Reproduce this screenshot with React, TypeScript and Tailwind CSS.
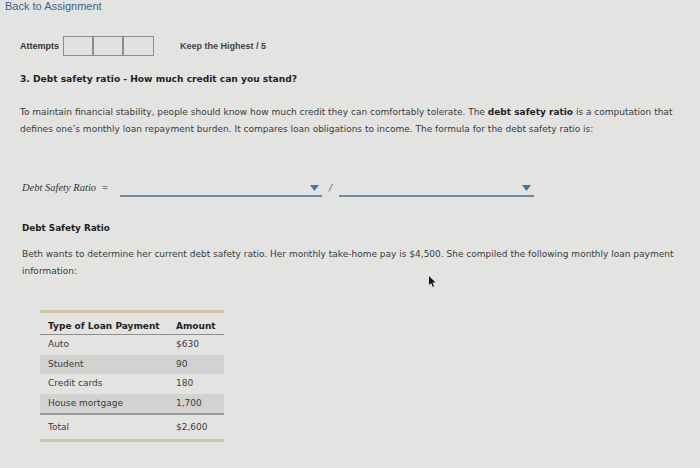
const rows = [
  { type: "Auto", amount: "$630", shaded: false },
  { type: "Student", amount: "90", shaded: true },
  { type: "Credit cards", amount: "180", shaded: false },
  { type: "House mortgage", amount: "1,700", shaded: true },
];

function Dropdown({ width }: { width: string }) {
  return (
    <div className={`${width} h-[20px] flex items-end justify-end border-b-2 border-[#6f8aa6]`}>
      <svg width="9" height="6" viewBox="0 0 9 6" className="mb-[4px] mr-[3px]">
        <polygon points="0,0 9,0 4.5,6" fill="#3f77a8" />
      </svg>
    </div>
  );
}

export default function App() {
  const body = { fontFamily: '"DejaVu Sans", Verdana, sans-serif' };
  const arial = { fontFamily: '"Liberation Sans", Arial, sans-serif' };

  return (
    <div className="relative w-[700px] h-[468px] overflow-hidden bg-[#e3e4e2] text-[#333]" style={body}>
      <div className="pl-[5px] text-[11px] leading-[12px] text-[#3d5f8e]" style={arial}>
        Back to Assignment
      </div>

      {/* attempts */}
      <div className="mt-[24px] pl-[20px] flex items-center h-[20px]" style={arial}>
        <span className="text-[9px] font-bold text-[#333] mr-[4px] mt-[1px]">Attempts</span>
        <div className="flex h-[20px] border border-[#8e8e8e] bg-[#e1e2e0]">
          <div className="w-[30px] border-r-2 border-[#8e8e8e]" />
          <div className="w-[30px] border-r-2 border-[#8e8e8e]" />
          <div className="w-[29px]" />
        </div>
        <span className="ml-[26px] mt-[1px] text-[9px] font-bold text-[#444]">Keep the Highest / 5</span>
      </div>

      <div className="pl-[20px] pr-[20px]">
        <h2 className="mt-[17px] text-[9.1px] leading-[12px] font-bold text-[#222]">
          3. Debt safety ratio - How much credit can you stand?
        </h2>
        <p className="mt-[19px] text-[9px] leading-[17px] text-[#3a3a3a]">
          To maintain financial stability, people should know how much credit they can comfortably tolerate. The{" "}
          <b className="text-[#222]">debt safety ratio</b> is a computation that defines one’s monthly loan repayment
          burden. It compares loan obligations to income. The formula for the debt safety ratio is:
        </p>

        {/* formula */}
        <div className="mt-[39px] flex items-end h-[20px] pl-[2px]">
          <span
            className="w-[98px] italic text-[10.5px] leading-[14px] text-[#333] mb-[2px]"
            style={{ fontFamily: '"Liberation Serif", "Times New Roman", serif' }}
          >
            Debt Safety Ratio&nbsp; =
          </span>
          <Dropdown width="w-[202px]" />
          <span className="ml-[7px] mr-[7px] italic text-[9px] leading-[14px] mb-[2px] text-[#555]">/</span>
          <Dropdown width="w-[195px]" />
        </div>

        <h3 className="mt-[25px] pl-[2px] text-[8.8px] leading-[12px] font-bold text-[#222]">Debt Safety Ratio</h3>
        <p className="mt-[12px] pl-[2px] text-[9px] leading-[17px] text-[#3a3a3a]">
          Beth wants to determine her current debt safety ratio. Her monthly take-home pay is $4,500. She compiled the
          following monthly loan payment information:
        </p>

        {/* table */}
        <div className="mt-[30px] ml-[20px] w-[184px] border-t-[3px] border-b-[3px] border-[#cbc4a6]">
          <div className="flex h-[22px] items-end pb-[1px] border-b border-[#8f8f8f] text-[9px] font-bold text-[#222]">
            <div className="w-[136px] pl-[8px]">Type of Loan Payment</div>
            <div>Amount</div>
          </div>
          {rows.map((r) => (
            <div
              key={r.type}
              className={`flex h-[19.6px] items-center text-[9px] text-[#3a3a3a] ${r.shaded ? "bg-[#d2d3d1]" : ""}`}
            >
              <div className="w-[136px] pl-[8px]">{r.type}</div>
              <div>{r.amount}</div>
            </div>
          ))}
          <div className="flex h-[26px] items-center border-t-2 border-[#9a9a9a] text-[9px] text-[#3a3a3a]">
            <div className="w-[136px] pl-[8px]">Total</div>
            <div>$2,600</div>
          </div>
        </div>
      </div>

      {/* mouse cursor */}
      <svg className="absolute left-[429px] top-[276px]" width="8" height="12" viewBox="0 0 8 12">
        <polygon points="0,0 0,9 2.2,7 3.8,11 5,10.4 3.5,6.6 6.5,6.6" fill="#111" />
      </svg>
    </div>
  );
}
